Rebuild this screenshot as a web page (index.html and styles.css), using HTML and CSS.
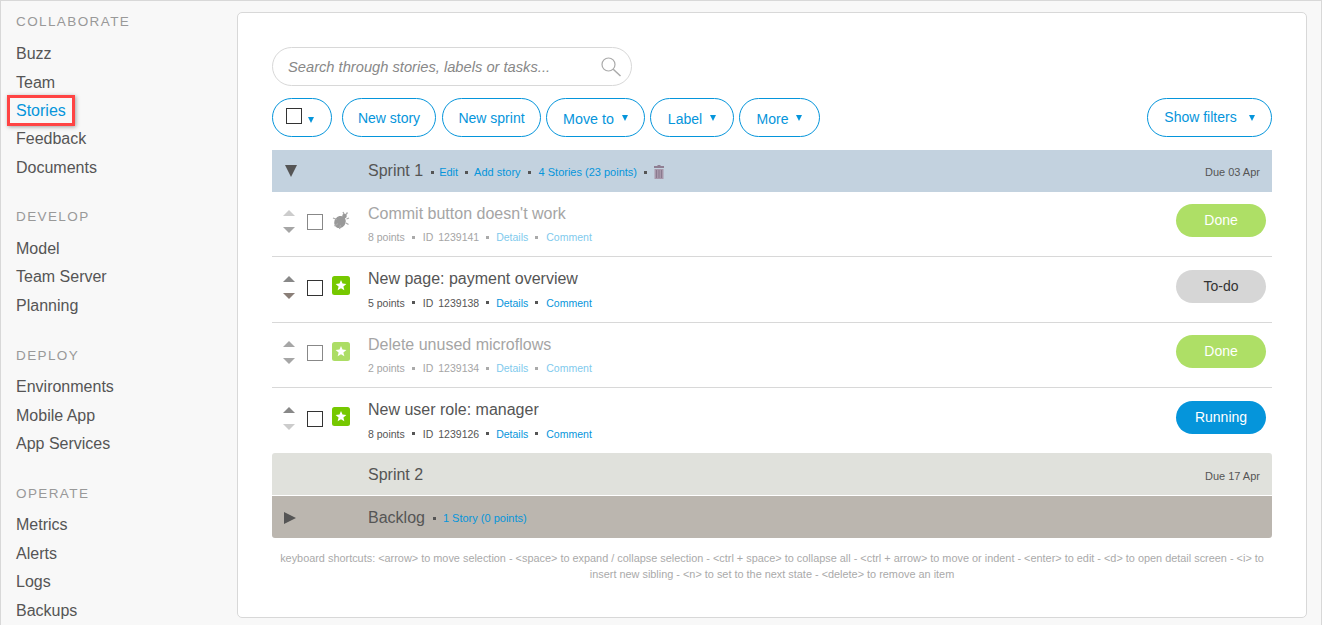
FILE: index.html
```html
<!DOCTYPE html>
<html lang="en" dir="ltr">
  <head>
    <meta charset="utf-8">
    <title>Stories</title>
    <link rel="stylesheet" href="styles.css">
  </head>
  <body>
    <div class="page">
      <nav class="sidebar">
        <h4>Collaborate</h4>
        <ul>
          <li>Buzz</li>
          <li>Team</li>
          <li class="active">Stories<span class="callout"></span></li>
          <li>Feedback</li>
          <li>Documents</li>
        </ul>
        <h4>Develop</h4>
        <ul>
          <li>Model</li>
          <li>Team Server</li>
          <li>Planning</li>
        </ul>
        <h4>Deploy</h4>
        <ul>
          <li>Environments</li>
          <li>Mobile App</li>
          <li>App Services</li>
        </ul>
        <h4>Operate</h4>
        <ul>
          <li>Metrics</li>
          <li>Alerts</li>
          <li>Logs</li>
          <li>Backups</li>
        </ul>
      </nav>

      <main class="panel">
        <div class="search">
          <span>Search through stories, labels or tasks...</span>
          <svg width="22" height="22" viewBox="0 0 22 22" fill="none" stroke="#aaa">
            <circle cx="8.5" cy="8.5" r="6.5" stroke-width="1.2"/>
            <path d="M13.2 13.2 L20.5 20" stroke-width="1.5"/>
          </svg>
        </div>

        <div class="toolbar">
          <button class="btn btn-check"><span class="box"></span><i class="caret"></i></button>
          <button class="btn btn-story">New story</button>
          <button class="btn btn-sprint">New sprint</button>
          <button class="btn btn-move">Move to <i class="caret"></i></button>
          <button class="btn btn-label">Label <i class="caret"></i></button>
          <button class="btn btn-more">More <i class="caret"></i></button>
          <button class="btn btn-filters">Show filters <i class="caret"></i></button>
        </div>

        <div class="group group-blue">
          <span class="tri tri-down"></span>
          <span class="group-name">Sprint 1</span>
          <span class="dot"></span><a>Edit</a>
          <span class="dot"></span><a>Add story</a>
          <span class="dot"></span><a>4 Stories (23 points)</a>
          <span class="dot"></span>
          <svg class="trash" width="10" height="14" viewBox="0 0 10 14">
            <path d="M3.5 0h3v1H10v2H0V1h3.5z" fill="#8f7f93"/>
            <rect x="0.5" y="4" width="9" height="10" fill="#a898ab"/>
            <path d="M2.5 5v8M5 5v8M7.5 5v8" stroke="#8a7a8e" stroke-width="1"/>
          </svg>
          <span class="due">Due 03 Apr</span>
        </div>

        <div class="story faded">
          <div class="arrows"><span class="up light"></span><span class="down"></span></div>
          <span class="box"></span>
          <svg class="type type-bug" width="18" height="19" viewBox="0 0 18 19" fill="#999">
            <ellipse cx="8" cy="11" rx="5.5" ry="6.3" transform="rotate(35 8 11)"/>
            <circle cx="12.5" cy="5" r="2.3"/>
            <path d="M11 1 L12 3 M15.5 1.5 L14 3.5 M1 7 L5 8.5 M2.5 15 L6 12.5 M7.5 18 L8.5 14 M14.5 8 L17 7 M14 12 L16.5 13.5" stroke="#aaa" stroke-width="1.3"/>
          </svg>
          <div class="story-text">
            <div class="story-title">Commit button doesn't work</div>
            <div class="meta">8 points<span class="dot"></span>ID<b>1239141</b><span class="dot"></span><a>Details</a><span class="dot"></span><a>Comment</a></div>
          </div>
          <span class="state state-done">Done</span>
        </div>

        <div class="story">
          <div class="arrows"><span class="up"></span><span class="down brown"></span></div>
          <span class="box"></span>
          <svg class="type" width="18" height="19" viewBox="0 0 18 19">
            <rect width="18" height="19" rx="2.5" fill="#76c800"/>
            <path d="M9 4l1.5 3.6 3.9.3-3 2.5.95 3.8L9 12.2l-3.35 2 .95-3.8-3-2.5 3.9-.3z" fill="#fff"/>
          </svg>
          <div class="story-text">
            <div class="story-title">New page: payment overview</div>
            <div class="meta">5 points<span class="dot"></span>ID<b>1239138</b><span class="dot"></span><a>Details</a><span class="dot"></span><a>Comment</a></div>
          </div>
          <span class="state state-todo">To-do</span>
        </div>

        <div class="story faded">
          <div class="arrows"><span class="up"></span><span class="down"></span></div>
          <span class="box"></span>
          <svg class="type" width="18" height="19" viewBox="0 0 18 19">
            <rect width="18" height="19" rx="2.5" fill="#76c800"/>
            <path d="M9 4l1.5 3.6 3.9.3-3 2.5.95 3.8L9 12.2l-3.35 2 .95-3.8-3-2.5 3.9-.3z" fill="#fff"/>
          </svg>
          <div class="story-text">
            <div class="story-title">Delete unused microflows</div>
            <div class="meta">2 points<span class="dot"></span>ID<b>1239134</b><span class="dot"></span><a>Details</a><span class="dot"></span><a>Comment</a></div>
          </div>
          <span class="state state-done">Done</span>
        </div>

        <div class="story last">
          <div class="arrows"><span class="up"></span><span class="down light"></span></div>
          <span class="box"></span>
          <svg class="type" width="18" height="19" viewBox="0 0 18 19">
            <rect width="18" height="19" rx="2.5" fill="#76c800"/>
            <path d="M9 4l1.5 3.6 3.9.3-3 2.5.95 3.8L9 12.2l-3.35 2 .95-3.8-3-2.5 3.9-.3z" fill="#fff"/>
          </svg>
          <div class="story-text">
            <div class="story-title">New user role: manager</div>
            <div class="meta">8 points<span class="dot"></span>ID<b>1239126</b><span class="dot"></span><a>Details</a><span class="dot"></span><a>Comment</a></div>
          </div>
          <span class="state state-running">Running</span>
        </div>

        <div class="group group-light">
          <span class="tri"></span>
          <span class="group-name">Sprint 2</span>
          <span class="due">Due 17 Apr</span>
        </div>

        <div class="group group-dark">
          <span class="tri tri-right"></span>
          <span class="group-name">Backlog</span>
          <span class="dot"></span><a>1 Story (0 points)</a>
        </div>

        <p class="shortcuts">keyboard shortcuts: &lt;arrow&gt; to move selection - &lt;space&gt; to expand / collapse selection - &lt;ctrl + space&gt; to collapse all - &lt;ctrl + arrow&gt; to move or indent - &lt;enter&gt; to edit - &lt;d&gt; to open detail screen - &lt;i&gt; to insert new sibling - &lt;n&gt; to set to the next state - &lt;delete&gt; to remove an item</p>
      </main>
    </div>
  </body>
</html>
```

FILE: styles.css
```css
html, body {
  margin: 0;
  height: 100%;
  overflow: hidden;
  font-family: "Liberation Sans", Arial, sans-serif;
}

.page {
  display: flex;
  align-items: flex-start;
  box-sizing: border-box;
  height: 625px;
  background: #f8f8f8;
  border: 1px solid #d8d8d8;
  border-bottom: 0;
  overflow: hidden;
}

/* sidebar */
.sidebar {
  width: 236px;
  flex: none;
  padding: 13px 0 0 15px;
  box-sizing: border-box;
}

.sidebar h4 {
  margin: 0 0 9.5px;
  height: 16px;
  line-height: 16px;
  font-size: 13.5px;
  font-weight: normal;
  letter-spacing: 1.4px;
  text-transform: uppercase;
  color: #999;
}

.sidebar h4:first-child { margin-bottom: 10.2px; }

.sidebar ul {
  margin: 0 0 27.6px;
  padding: 0;
  list-style: none;
}

.sidebar ul:first-of-type { margin-bottom: 27.3px; }

.sidebar li {
  position: relative;
  height: 28.4px;
  line-height: 28.4px;
  font-size: 16px;
  color: #555;
}

.sidebar li.active {
  color: #0595db;
}

.callout {
  position: absolute;
  left: -9px;
  top: -1.5px;
  width: 62px;
  height: 25px;
  border: 3px solid #f44;
  box-shadow: 1px 1px 4px rgba(0, 0, 0, 0.35);
}

/* main panel */
.panel {
  width: 1070px;
  height: 606px;
  margin-top: 11px;
  box-sizing: border-box;
  padding: 34px 34px 0;
  background: #fff;
  border: 1px solid #d8d8d8;
  border-radius: 5px;
}

.search {
  display: flex;
  align-items: center;
  justify-content: space-between;
  box-sizing: border-box;
  width: 360px;
  height: 39px;
  padding: 0 9px 0 15px;
  border: 1px solid #d8d8d8;
  border-radius: 20px;
  font-size: 14.7px;
  font-style: italic;
  color: #888;
}

.toolbar {
  display: flex;
  gap: 5px;
  margin: 12px 0 13px;
}

.btn {
  display: flex;
  align-items: center;
  justify-content: center;
  box-sizing: border-box;
  height: 39px;
  padding: 0;
  background: #fff;
  border: 1px solid #0595db;
  border-radius: 20px;
  font-family: inherit;
  font-size: 14px;
  color: #0595db;
}

.btn-check { width: 60px; margin-right: 5px; padding-left: 13px; justify-content: flex-start; }
.btn-story { width: 94px; margin-right: 1px; }
.btn-sprint { width: 99px; }
.btn-move { width: 99px; padding-top: 2px; font-size: 14.3px; }
.btn-label { width: 84px; padding-top: 2px; }
.btn-more { width: 81px; padding-top: 2px; }
.btn-filters { width: 125px; margin-left: auto; padding-bottom: 1px; }

.btn-filters .caret { margin: 1px 0 0 12px; }
.btn-move .caret, .btn-label .caret, .btn-more .caret { margin-left: 8px; margin-bottom: 1px; }

.caret {
  display: inline-block;
  border-left: 3.5px solid transparent;
  border-right: 3.5px solid transparent;
  border-top: 6px solid #0595db;
}

.btn-check .caret { margin: 5px 0 0 6px; }

.box {
  display: block;
  flex: none;
  box-sizing: border-box;
  width: 16px;
  height: 16px;
  background: #fff;
  border: 1px solid #333;
}

.btn-check .box { margin-bottom: 4px; }

/* sprint rows */
.group {
  display: flex;
  align-items: center;
  box-sizing: border-box;
  height: 42px;
  padding: 0 12px;
  font-size: 11px;
  color: #555;
}

.group a { margin-top: 1px; color: #0595db; }

.group-blue { background: #c3d2df; }
.group-light { padding-top: 2px; background: #e0e1dc; border-radius: 3px 3px 0 0; }
.group-dark { padding-top: 2px; margin-top: 1px; background: #bbb6af; border-radius: 0 0 3px 3px; }

.tri {
  flex: none;
  width: 84px;
  height: 12px;
}

.tri-down {
  width: 12px;
  height: 0;
  margin: 0 71px 0 1px;
  border-left: 6px solid transparent;
  border-right: 6px solid transparent;
  border-top: 12px solid #555;
  box-sizing: border-box;
}

.tri-right {
  width: 0;
  height: 0;
  margin-right: 72px;
  border-top: 6px solid transparent;
  border-bottom: 6px solid transparent;
  border-left: 12px solid #555;
}

.group-name {
  font-size: 16px;
  color: #555;
}

.group .dot { margin: 2px 6px 0 7px; }
.group .group-name + .dot { margin: 2px 5px 0 8px; }
.group-dark .group-name + .dot { margin-right: 7px; }
.group a:nth-of-type(2) + .dot { margin-right: 8px; }

.dot {
  display: inline-block;
  flex: none;
  width: 3px;
  height: 3px;
  background: #555;
}

.trash { margin: 2px 0 0 1px; }

.due {
  margin: 1px 0 0 auto;
  font-size: 11px;
  color: #555;
}

.group-light .due { margin-top: 2px; }

/* story rows */
.story {
  display: flex;
  align-items: flex-start;
  box-sizing: border-box;
  height: 65.4px;
  padding: 12px 6px 0 11px;
  border-bottom: 1px solid #d8d8d8;
}

.story.last { height: 64.8px; border-bottom: 0; }

.arrows {
  display: flex;
  flex-direction: column;
  gap: 11px;
  flex: none;
  width: 13px;
  margin-top: 6.4px;
}

.up, .down {
  display: block;
  width: 0;
  height: 0;
  border-left: 6px solid transparent;
  border-right: 6px solid transparent;
}

.up { border-bottom: 6px solid #888; }
.down { border-top: 6px solid #888; }
.down.brown { border-top-color: #8a7f78; }
.up.light { border-bottom-color: #bbb; }
.down.light { border-top-color: #ccc; }

.story > .box { margin: 10.4px 0 0 11px; }
.type { flex: none; margin: 7px 0 0 9px; }

.story-text { margin-left: 18px; }

.story-title {
  height: 20px;
  line-height: 20px;
  font-size: 16px;
  color: #555;
}

.meta {
  display: flex;
  align-items: center;
  margin-top: 6.4px;
  height: 14px;
  font-size: 10.5px;
  color: #555;
}

.meta .dot { margin: 0 7px; }
.meta .dot:first-of-type { margin-right: 8px; }
.meta a + .dot { margin-right: 8px; }
.meta b { font-weight: normal; margin-left: 5px; }
.meta a { color: #0595db; }

.state {
  flex: none;
  width: 90px;
  height: 33px;
  margin: 0.4px 0 0 auto;
  line-height: 33px;
  border-radius: 17px;
  text-align: center;
  font-size: 14px;
}

.state-done { background: #aedf66; color: #fff; }
.state-todo { background: #d6d6d6; color: #333; }
.state-running { background: #0595db; color: #fff; }

/* done stories are washed out */
.faded .story-title, .faded .meta { color: #a5a5a5; }
.faded .meta a { color: #7fcaed; }
.faded .dot { background: #aaa; }
.faded .box { border-color: #888; }
.faded .type { opacity: 0.6; }
.faded .type-bug { opacity: 1; }
.faded .up, .faded .down { opacity: 0.75; }

.shortcuts {
  margin: 12px 0 0;
  line-height: 16px;
  text-align: center;
  font-size: 10.9px;
  color: #aaa;
}
```
